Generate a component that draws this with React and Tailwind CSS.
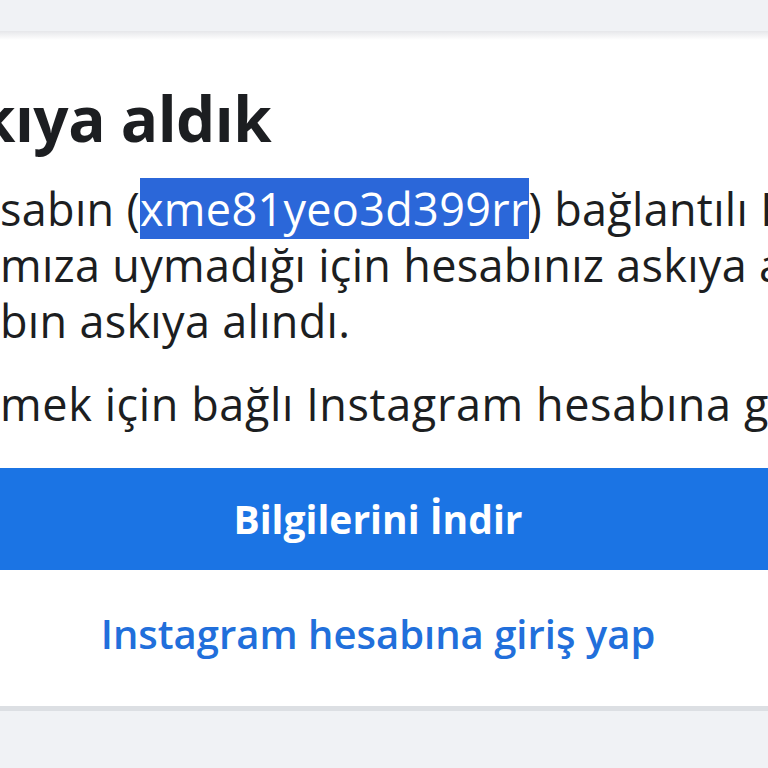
export default function App() {
  return (
    <div
      className="w-[768px] h-[768px] overflow-hidden bg-[#f0f2f5] text-[#1c1e21]"
      style={{ fontFamily: '"Open Sans", "Noto Sans", sans-serif' }}
    >
      <div className="h-[31px]" />
      <div className="bg-white border-b-[5px] border-[#dcdfe3]">
        <div className="h-[9px] bg-gradient-to-b from-[#e6e7ea] to-white" />
        <div className="pt-[40px] overflow-hidden">
          {/* Heading */}
          <h1 className="whitespace-nowrap text-[62px] leading-[76px] font-bold -ml-[23px] tracking-[-0.5px]">
            kıya aldık
          </h1>

          {/* Paragraph */}
          <div className="mt-[25px] text-[45px] leading-[56px] whitespace-nowrap tracking-[0.3px]">
            <div>
              sabın (
              <span className="bg-[#2b67d9] text-white">xme81yeo3d399rr</span>
              ) bağlantılı Facebook
            </div>
            <div>mıza uymadığı için hesabınız askıya alındı</div>
            <div>bın askıya alındı.</div>
          </div>
          <div className="mt-[27px] text-[45px] leading-[56px] whitespace-nowrap tracking-[0.6px]">
            mek için bağlı Instagram hesabına giriş yap
          </div>

          {/* Actions */}
          <div className="mt-[36px] h-[102px] bg-[#1b74e4] flex items-center justify-center pr-[12px]">
            <span className="text-white font-bold text-[39px]">
              Bilgilerini İndir
            </span>
          </div>
          <div className="mt-[40px] pb-[48px] flex justify-center pr-[12px]">
            <span className="text-[#216fdb] font-semibold text-[40px] leading-[48px]">
              Instagram hesabına giriş yap
            </span>
          </div>
        </div>
      </div>
    </div>
  );
}
